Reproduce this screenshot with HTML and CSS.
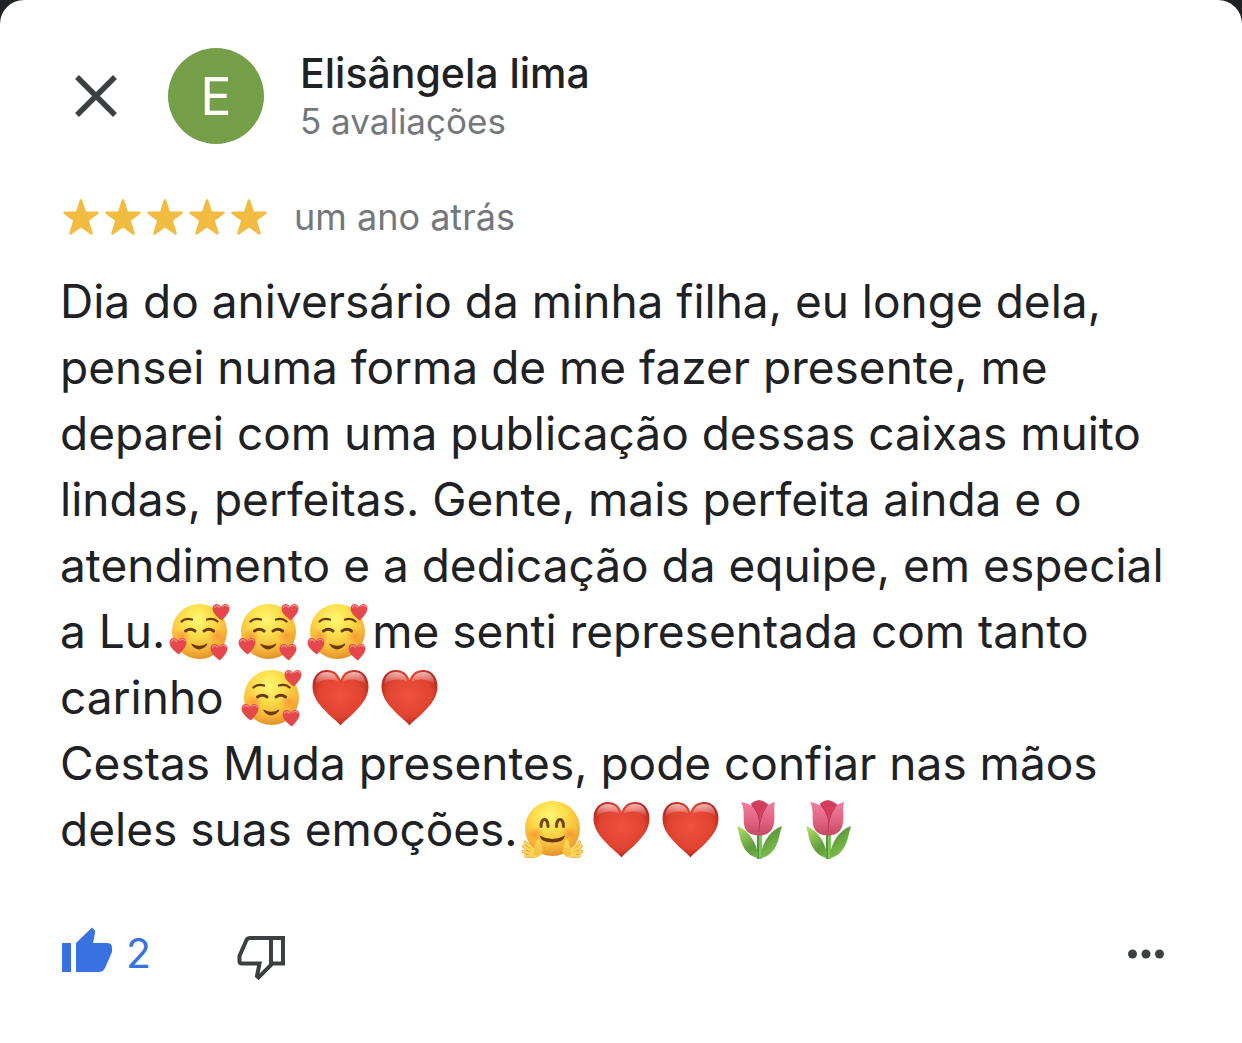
FILE: index.html
```html
<!DOCTYPE html>
<html lang="pt-BR">
<head>
<meta charset="utf-8">
<meta name="viewport" content="width=device-width, initial-scale=1">
<title>Avaliação de Elisângela lima</title>
<link rel="stylesheet" href="styles.css">
</head>
<body>
<svg class="sprite" aria-hidden="true">
  <defs>
    <radialGradient id="skin" cx="45%" cy="28%" r="72%">
      <stop offset="0" stop-color="#fff873"/><stop offset=".4" stop-color="#fddd4b"/><stop offset=".75" stop-color="#f8b93a"/><stop offset="1" stop-color="#e2932c"/>
    </radialGradient>
    <radialGradient id="blush"><stop offset="0" stop-color="#fb7d2c" stop-opacity=".6"/><stop offset="1" stop-color="#fb8c2c" stop-opacity="0"/></radialGradient>
    <radialGradient id="red" cx="50%" cy="45%" r="60%">
      <stop offset="0" stop-color="#ee5140"/><stop offset=".65" stop-color="#e14331"/><stop offset="1" stop-color="#ac211b"/>
    </radialGradient>
    <linearGradient id="shine" x1="0" y1="0" x2="0" y2="1"><stop offset="0" stop-color="#fff" stop-opacity=".65"/><stop offset="1" stop-color="#fff" stop-opacity="0"/></linearGradient>
    <linearGradient id="petal" x1="0" y1="0" x2="0" y2="1"><stop offset="0" stop-color="#ef7ea0"/><stop offset=".6" stop-color="#e0607f"/><stop offset="1" stop-color="#c64a62"/></linearGradient>
    <linearGradient id="leaf" x1="0" y1="0" x2="1" y2="1"><stop offset="0" stop-color="#b9e26a"/><stop offset=".5" stop-color="#5f9c3c"/><stop offset="1" stop-color="#8fcf55"/></linearGradient>
    <linearGradient id="hand" x1="0" y1="0" x2="0" y2="1"><stop offset="0" stop-color="#ffd955"/><stop offset="1" stop-color="#f3bd3f"/></linearGradient>
  </defs>
  <symbol id="mini-heart" viewBox="0 0 18 18">
    <path d="M9 4C7 0 1 0 .6 5 .3 10 5 14 10 17.500C14 13 18 9 17.400 4.500 16.500 0 11 0 9 4Z" fill="#e5484a"/>
    <path d="M2.500 4.500C3 2 6 1.800 7.500 4.500M11 3.500C12.500 1.600 15.500 2 16 4" fill="none" stroke="#ff8f8f" stroke-width="1.200" stroke-linecap="round"/>
  </symbol>
  <symbol id="loving" viewBox="0 0 69 60">
    <circle cx="34.500" cy="29.500" r="27.500" fill="url(#skin)"/>
    <ellipse cx="17" cy="34" rx="9" ry="8" fill="url(#blush)"/>
    <ellipse cx="52" cy="34" rx="9" ry="8" fill="url(#blush)"/>
    <g fill="none" stroke="#6b3a0b" stroke-linecap="round" stroke-width="2.300">
      <path d="M16.500 19.500Q20.500 15.500 27 17.500M42 17.500Q48.500 15.500 52.500 19.500"/>
      <path d="M20.500 29Q25.500 25.500 30 29M39 29Q44 25.500 48.500 29" stroke-width="3"/>
    </g>
    <path d="M26.500 41.500Q34.500 46 42 41.500Q42.500 41.500 42 43Q34.500 51.500 27 43.500Q26 42 26.500 41.500Z" fill="#6b3a0b"/>
    <use href="#mini-heart" x="47" y="1" width="18" height="18"/>
    <use href="#mini-heart" x="4" y="35" width="18" height="18"/>
    <use href="#mini-heart" x="45" y="41" width="18" height="18"/>
  </symbol>
  <symbol id="heart" viewBox="0 0 69 60">
    <path d="M34.500 57.500C31 53 24 48.500 17 40.500 10 33 6.500 26 6.500 18.500 6.500 8 13 2 21 2 27.500 2 32.500 5.500 34.500 12 36.500 5.500 41.500 2 48 2 56 2 62.500 8 62.500 18.500 62.500 26 59 33 52 40.500 45 48.500 38 53 34.500 57.500Z" fill="url(#red)"/>
    <path d="M9.500 17C9.500 8 14 4 21 4 27 4 31 7.500 32.500 14 26 10 15 11 9.500 17ZM36.500 14C38 7.500 42 4 48 4 55 4 59.500 8 59.500 17 54 11 43 10 36.500 14Z" fill="url(#shine)"/>
  </symbol>
  <symbol id="hug" viewBox="0 0 69 60">
    <circle cx="34.500" cy="28.500" r="27.500" fill="url(#skin)"/>
    <ellipse cx="17" cy="34" rx="9" ry="8" fill="url(#blush)"/>
    <ellipse cx="52" cy="34" rx="9" ry="8" fill="url(#blush)"/>
    <path d="M23 26.500C23 17 30 17 30 26.500M38.500 26.500C38.500 17 45.500 17 45.500 26.500" fill="none" stroke="#754312" stroke-width="3" stroke-linecap="round"/>
    <path d="M21.500 35.500Q34.500 42.500 47 35.500Q46 42.500 34.500 42.500 23 42.500 21.500 35.500Z" fill="#6b3a0b"/>
    <g id="hug-hand">
      <path d="M14 56.500C19 59 24.500 55.500 24.500 50 24.500 46 21 43 22 40 20 38 17.500 42 17 46Z" fill="url(#hand)"/>
      <path d="M15.500 49.500L7.500 42.500M14 51.500L6 46.500M14 54L5.500 51.500M16 56L8 56" fill="none" stroke="#d99a32" stroke-width="3.600" stroke-linecap="round"/>
      <path d="M16 49.500L7.500 42.500M15 51.500L6 46.500M15 54L5.500 51.500M17 56L8 56" fill="none" stroke="#ffd65a" stroke-width="2.600" stroke-linecap="round"/>
    </g>
    <use href="#hug-hand" transform="matrix(-1 0 0 1 69 0)"/>
  </symbol>
  <symbol id="tulip" viewBox="0 0 69 60">
    <path d="M32 34H37V59H32Z" fill="#7cc654"/>
    <path d="M32 34H34V59H32Z" fill="#4f9840"/>
    <path d="M32.500 58C28 57 22 54 18 46 15 40 15 36 12 26 20 29 29 36 33 53ZM36.500 58C41 57 47 54 51 46 54 40 54 36 57 26 49 29 40 36 36 53Z" fill="url(#leaf)"/>
    <path d="M26 3.500Q30 0 34 0 39 1 42.500 4L39 20H30Z" fill="#d23e5c"/>
    <path d="M16 2C22 3 28 5 31 11L34.500 20 39 10C41 5 46 3 50 2 48 10 51 17 48 27 46 33 40 35.500 34 35.500 26 35.500 20 32 19 24 18 15 20 10 16 2Z" fill="url(#petal)"/>
    <path d="M27 5Q34 13 34.500 22L34 32M43 4Q36 13 34.500 24" fill="none" stroke="#b93857" stroke-width="1"/>
  </symbol>
  <symbol id="star" viewBox="0 0 42 42">
    <path d="M21 4.500L25 16.800H37.500L27.500 24.300 31.500 37.500 21 30 10.500 37.500 14.500 24.300 4.500 16.800H17Z" fill="#f2bc42" stroke="#f2bc42" stroke-width="2.600" stroke-linejoin="round"/>
  </symbol>
</svg>

<main class="review">
  <header class="author">
    <button class="icon-button close" type="button" aria-label="Fechar">
      <svg width="44" height="44" viewBox="0 0 44 44"><path d="M3 3L41 41M41 3L3 41" stroke="#3c4043" stroke-width="5.500"/></svg>
    </button>
    <div class="avatar" aria-hidden="true">E</div>
    <div class="identity">
      <h1 class="name">Elisângela lima</h1>
      <p class="count">5 avaliações</p>
    </div>
  </header>

  <div class="rating">
    <div class="stars" role="img" aria-label="5 estrelas">
      <svg><use href="#star"/></svg><svg><use href="#star"/></svg><svg><use href="#star"/></svg><svg><use href="#star"/></svg><svg><use href="#star"/></svg>
    </div>
    <span class="date">um ano atrás</span>
  </div>

  <p class="text">Dia do aniversário da minha filha, eu longe dela, pensei numa forma de me fazer presente, me deparei com uma publicação dessas caixas muito lindas, perfeitas. Gente, mais perfeita ainda e o atendimento e a dedicação da equipe, em especial a Lu.<svg class="emoji"><use href="#loving"/></svg><svg class="emoji"><use href="#loving"/></svg><svg class="emoji"><use href="#loving"/></svg>me senti representada com tanto carinho <svg class="emoji"><use href="#loving"/></svg><svg class="emoji"><use href="#heart"/></svg><svg class="emoji"><use href="#heart"/></svg><br>Cestas Muda presentes, pode confiar nas mãos deles suas emoções.<svg class="emoji"><use href="#hug"/></svg><svg class="emoji"><use href="#heart"/></svg><svg class="emoji"><use href="#heart"/></svg><svg class="emoji"><use href="#tulip"/></svg><svg class="emoji"><use href="#tulip"/></svg></p>

  <footer class="actions">
    <button class="icon-button like" type="button" aria-label="Gostei, 2">
      <svg width="50" height="56" viewBox="0 0 50 56"><path d="M0 16H9V45H0ZM14 16L30 0.500 32.500 3Q33.500 4 33 6L31 16H45Q50 16 50 21V25L43 41Q41 45 37 45H14Z" fill="#3871e0"/></svg>
      <span>2</span>
    </button>
    <button class="icon-button" type="button" aria-label="Não gostei">
      <svg width="50" height="56" viewBox="0 0 50 56"><path d="M36 11H15Q12.500 11 11.500 13L4.500 29V34Q4.500 36.500 7 36.500H24.500L22 49 23.500 50.500 36 38ZM36 11H48V36.500H36Z" fill="none" stroke="#3c4043" stroke-width="4"/></svg>
    </button>
    <button class="icon-button more" type="button" aria-label="Mais opções">
      <svg width="38" height="56" viewBox="0 0 38 56"><g fill="#3c4043"><circle cx="5.500" cy="27" r="4.500"/><circle cx="19" cy="27" r="4.500"/><circle cx="32.500" cy="27" r="4.500"/></g></svg>
    </button>
  </footer>
</main>
</body>
</html>
```
FILE: styles.css
```css
* {
  box-sizing: border-box;
}

body {
  margin: 0;
  background: #202124;
  color: #202124;
  font-family: Inter, "Liberation Sans", sans-serif;
}

h1,
p {
  margin: 0;
}

.sprite {
  position: absolute;
  width: 0;
  height: 0;
}

.review {
  min-height: 100vh;
  padding: 48px 60px;
  background: #fff;
  border-radius: 24px 24px 0 0;
}

.author {
  display: flex;
  align-items: center;
}

.icon-button {
  display: flex;
  align-items: center;
  padding: 0;
  border: 0;
  background: none;
  color: inherit;
  font: inherit;
  cursor: pointer;
}

.close {
  padding: 0 14px;
}

.avatar {
  display: flex;
  align-items: center;
  justify-content: center;
  width: 96px;
  height: 96px;
  margin: 0 36px;
  border-radius: 50%;
  background: #749e47;
  color: #fff;
  font-size: 52px;
}

.name {
  font-size: 41px;
  font-weight: 500;
  line-height: 50px;
}

.count {
  color: #74777b;
  font-size: 35px;
  line-height: 46px;
}

.rating {
  display: flex;
  align-items: center;
  gap: 24px;
  margin-top: 49px;
  color: #74777b;
  font-size: 36px;
  line-height: 48px;
}

.stars {
  display: flex;
}

.stars svg {
  width: 42px;
  height: 42px;
}

.text {
  margin-top: 27px;
  font-size: 46px;
  line-height: 66px;
}

.emoji {
  width: 69px;
  height: 60px;
  margin: -4px 0;
  vertical-align: -10px;
}

.actions {
  display: flex;
  align-items: center;
  gap: 84px;
  margin-top: 65px;
  padding: 0 17px 0 2px;
}

.like {
  gap: 14px;
  color: #3871e0;
  font-size: 41px;
}

.like span {
  line-height: 48px;
  padding-bottom: 4px;
}

.more {
  margin-left: auto;
}
```
